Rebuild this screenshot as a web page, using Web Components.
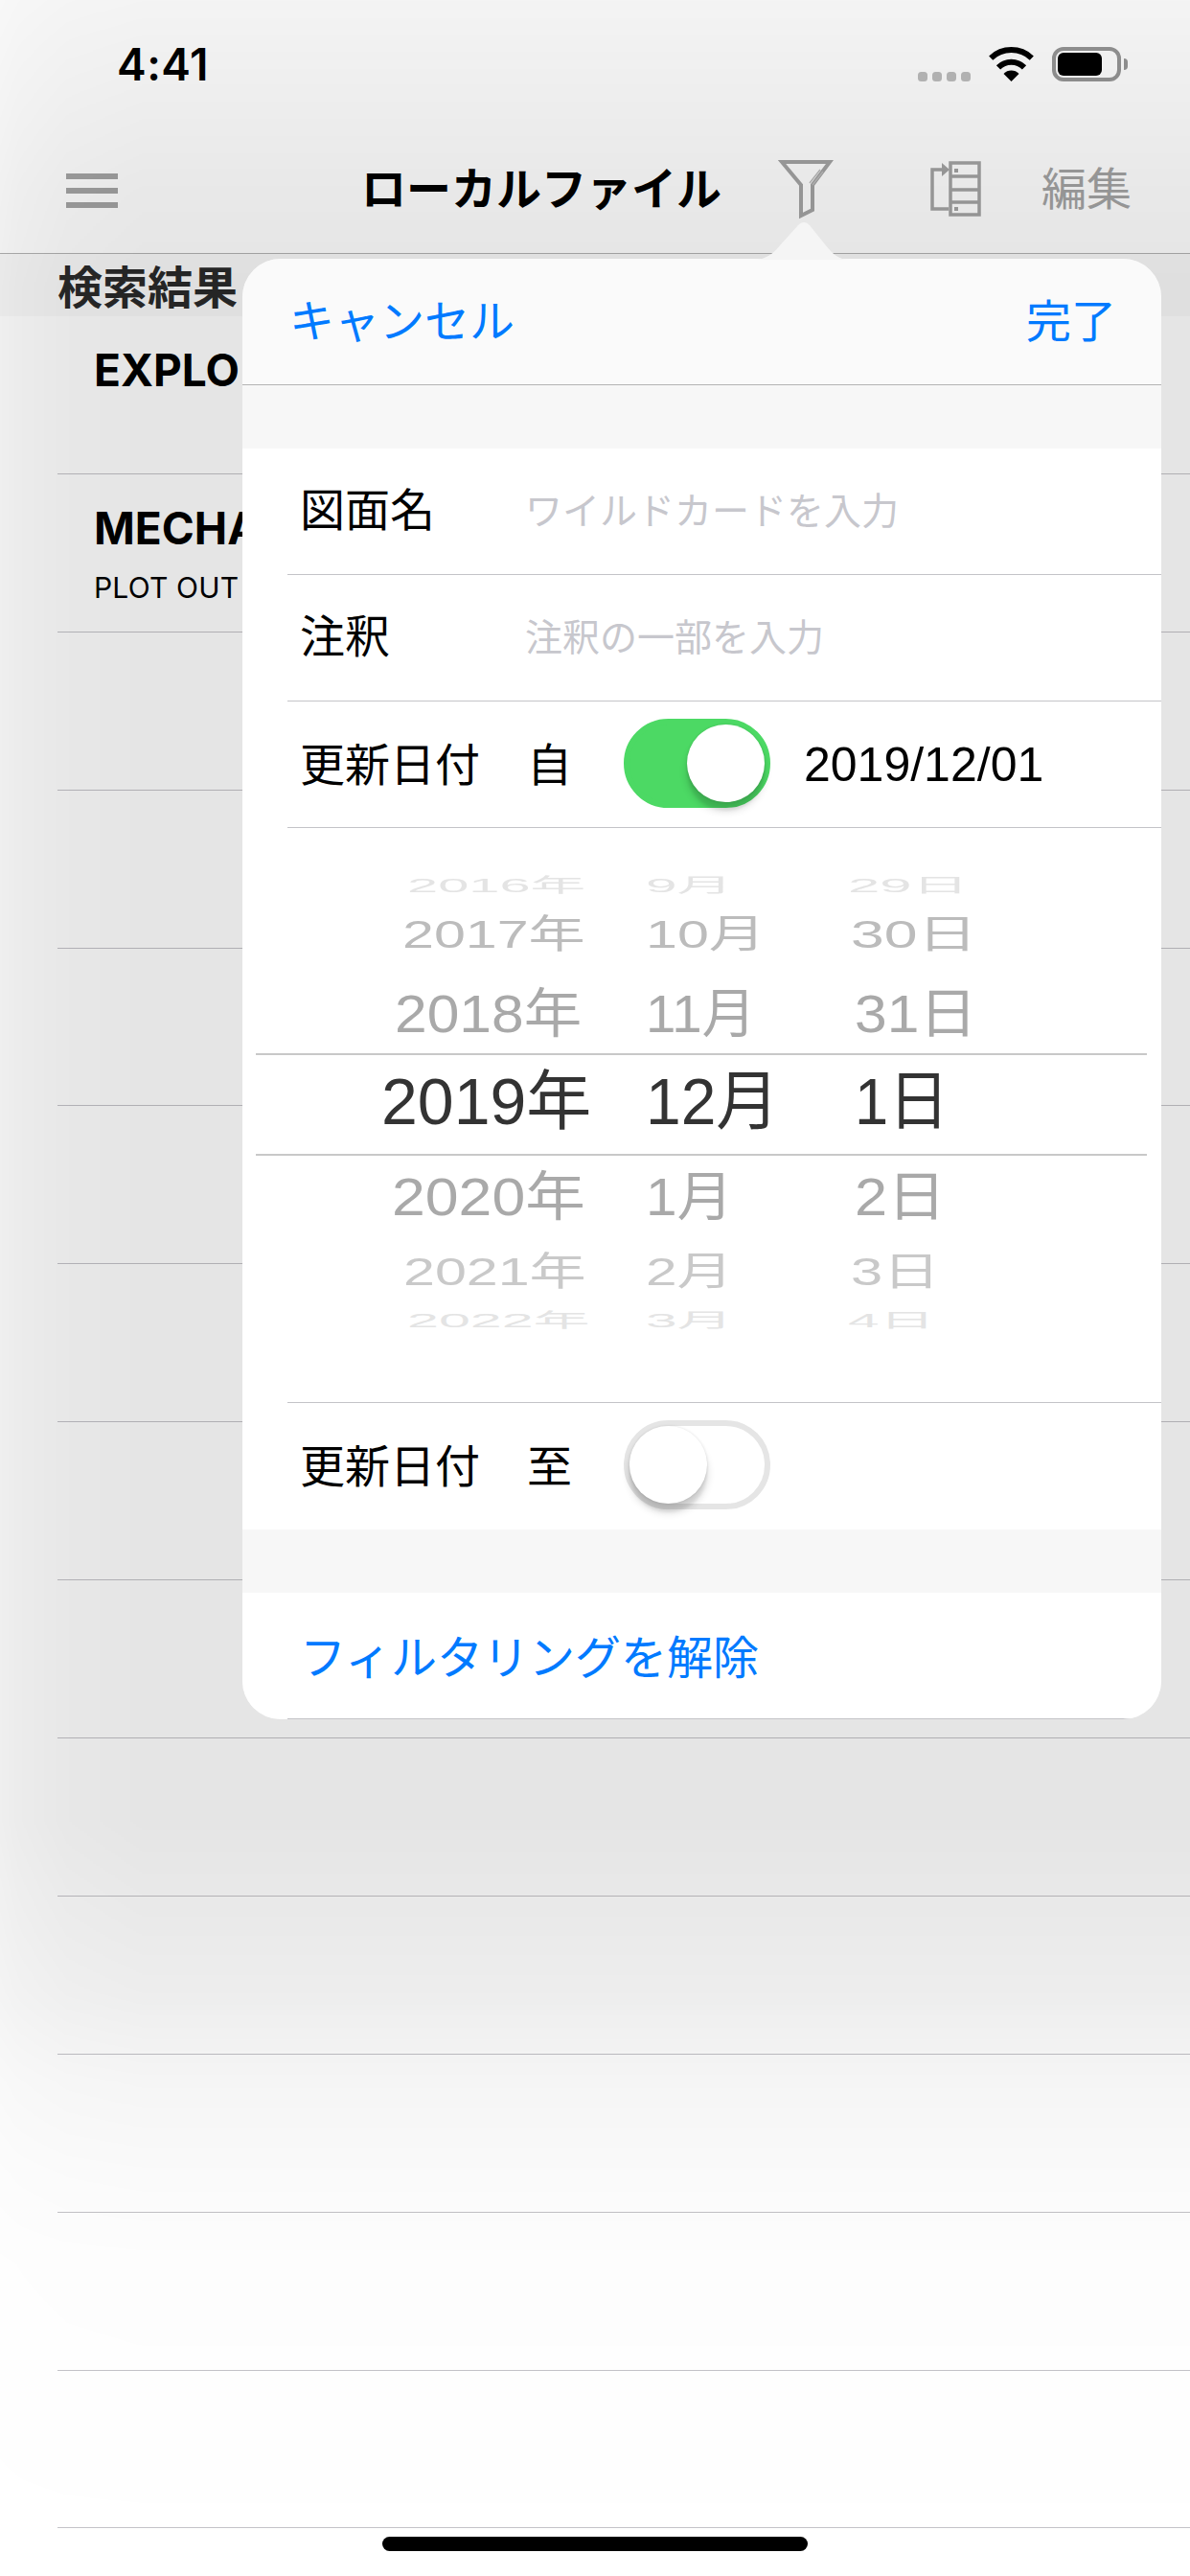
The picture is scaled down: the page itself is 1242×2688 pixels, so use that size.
<!doctype html>
<html lang="ja"><head><meta charset="utf-8">
<style>
html,body{margin:0;padding:0;background:#fff}
body{width:1242px;height:2688px;overflow:hidden;position:relative;font-family:"Liberation Sans","Noto Sans CJK JP",sans-serif;color:#000}
</style></head><body>
<app-screen></app-screen>
<script>
const CJK='"Noto Sans CJK JP",sans-serif';
function def(name,html,init){
  customElements.define(name,class extends HTMLElement{
    constructor(){super();const r=this.attachShadow({mode:'open'});r.innerHTML=typeof html==='function'?html(this):html;}
    connectedCallback(){
      if(typeof html==='function'){this.shadowRoot.innerHTML=html(this);}
      if(init)init(this);
    }
  });
}
def('status-bar',`<style>
:host{display:flex;height:144px;box-sizing:border-box;padding:41px 65px 0 122px;align-items:flex-start}
.t{font:600 46px/52px Inter,sans-serif;letter-spacing:.5px;flex:1}
.r{display:flex;align-items:flex-start;margin-top:8px}
.d{display:flex;gap:5px;margin-top:26px;margin-right:18px}
.d i{width:10px;height:10px;border-radius:3.5px;background:#bdbdbd}
svg{display:block}
.b{margin-left:18px;display:flex;align-items:center}
.bx{width:72px;height:36px;box-sizing:border-box;border:4px solid #969696;border-radius:12px;padding:2px}
.bx i{display:block;width:46px;height:24px;background:#000;border-radius:6px}
.n{width:4px;height:12px;background:#969696;border-radius:0 6px 6px 0;margin-left:3px}
</style><div class="t">4:41</div><div class="r"><div class="d"><i></i><i></i><i></i><i></i></div>
<svg width="49" height="36" viewBox="0 0 49 36"><path d="M3.2 11.6A31 31 0 0 1 45.8 11.6" fill="none" stroke="#000" stroke-width="6"/><path d="M11 21.3A19 19 0 0 1 38 21.3" fill="none" stroke="#000" stroke-width="6"/><path d="M24.5 36L16.5 28A11 11 0 0 1 32.5 28Z" fill="#000"/></svg>
<div class="b"><div class="bx"><i></i></div><div class="n"></div></div></div>`);

def('nav-bar',`<style>
:host{display:block;height:121px;box-sizing:border-box;border-bottom:1px solid #b2b2b2;position:relative}
.w{display:flex;align-items:center;height:120px;padding-left:69px}
.h{width:54px;display:flex;flex-direction:column;gap:9px;margin-top:-10px}
.h i{height:6px;background:#a4a4a4}
.ti{font:700 47px/60px ${CJK};margin-left:254px;width:435px;margin-top:-20px;white-space:nowrap}
svg{display:block}
.f{margin-top:-14px}.e{margin-left:100px;margin-top:-14px}
.ed{font:400 47px/60px ${CJK};color:#a4a4a4;margin-left:63px;margin-top:-21px}
</style><div class="w"><div class="h"><i></i><i></i><i></i></div><div class="ti">ローカルファイル</div>
<svg class="f" width="58" height="64" viewBox="0 0 58 64"><path d="M4 4H54L36 28V54L24 60V28Z" fill="none" stroke="#a4a4a4" stroke-width="4" stroke-linejoin="miter"/><path d="M44 12L33 26M47 14L36 28" stroke="#bdbdbd" stroke-width="1.5" fill="none"/></svg>
<svg class="e" width="54" height="58" viewBox="0 0 54 58"><path d="M22 2H52V56H22ZM22 16H52M22 30H52M22 43H52" fill="none" stroke="#a4a4a4" stroke-width="3.5"/><path d="M26 8h4v4h-4zM26 48h4v4h-4z" fill="#a4a4a4"/><path d="M20 50H3V9H14" fill="none" stroke="#a4a4a4" stroke-width="3.5"/><path d="M13 2L21 9L13 16Z" fill="#a4a4a4"/></svg>
<div class="ed">編集</div></div>`);

def('result-row',el=>`<style>
:host{display:block;height:164.9px;box-sizing:border-box;margin-left:60px;border-bottom:1px solid #c4c3c8;padding:28px 0 0 38px;white-space:nowrap}
.a{font:700 46px/56px Inter,sans-serif;height:56px}
.b{font:400 30px/36px Inter,sans-serif;margin-top:16px;letter-spacing:.2px}
</style><div class="a">${el.getAttribute('t')||''}</div><div class="b">${el.getAttribute('s')||''}</div>`);

def('result-list',`<style>
:host{display:block}
.s{height:65px;background:rgba(0,0,0,.025);padding-left:60px;font:700 47px/63px ${CJK};color:#2a2a2a;white-space:nowrap}
</style><div class="s">検索結果</div><slot></slot>`);

def('ios-switch',el=>{const on=el.hasAttribute('on');return `<style>
:host{display:block;width:153px;height:93px;margin-top:-2px}
.t{width:153px;height:93px;box-sizing:border-box;border-radius:47px;border:6px solid ${on?'#4cd964':'#e5e5e5'};background:${on?'#4cd964':'#fff'};display:flex;justify-content:${on?'flex-end':'flex-start'}}
.k{width:81px;height:81px;border-radius:50%;background:#fff;box-shadow:0 9px 9px rgba(0,0,0,.16),0 9px 3px rgba(0,0,0,.06),0 0 3px rgba(0,0,0,.12)}
</style><div class="t"><div class="k"></div></div>`});

def('form-row',el=>`<style>
:host{display:block;height:132px;box-sizing:border-box;margin-left:47px;border-bottom:1px solid #c4c4c8;padding-left:13px}
.w{display:flex;align-items:center;height:131px;font:400 47px/60px ${CJK};white-space:nowrap}
</style><div class="w"><slot></slot></div>`);

def('date-wheel',el=>{
 const rows=[
 [36,'#e4e4e4',0,[['2016年',27,.85,.3],['9月',0,.86,.3],['29日',0,.88,.3]]],
 [66,'#bcbcbc',0,[['2017年',22,.87,.6],['10月',0,.87,.6],['30日',3,.92,.6]]],
 [91,'#a9a9a9',4,[['2018年',14,.89,.82],['11月',0,.83,.82],['31日',7,.89,.82]]],
 [107,'#333',-3,[['2019年',0,1,1],['12月',0,.97,1],['1日',7,.93,1]]],
 [84,'#a9a9a9',0,[['2020年',11,.92,.82],['1月',0,.86,.82],['2日',7,.9,.82]]],
 [68,'#c9c9c9',3,[['2021年',23,.87,.6],['2月',0,.86,.6],['3日',3,.88,.6]]],
 [42,'#e4e4e4',-1,[['2022年',27,.87,.3],['3月',0,.86,.3],['4日',0,.86,.3]]]];
 return `<style>
:host{display:block;height:599px;box-sizing:border-box;padding-top:42px}
.r{display:grid;grid-template-columns:276px 211px 1fr;padding-left:145px}
.c{display:block;white-space:nowrap;font:400 68px "Liberation Sans",${CJK};transform-origin:left center}
.m{border-top:2px solid #c8c8c8;border-bottom:2px solid #c8c8c8;margin:0 15px 0 14px;padding-left:131px;box-sizing:border-box}
</style>`+rows.map((r,i)=>{const lh=i==3?r[0]-4:r[0];return `<div class="r${i==3?' m':''}" style="height:${r[0]}px;color:${r[1]}">`+r[3].map(c=>`<span class="c" style="height:${lh}px;line-height:${lh}px;margin-left:${c[1]}px;transform:translateY(${r[2]}px) scale(${c[2]},${c[3]})">${c[0]}</span>`).join('')+`</div>`}).join('');
});

def('filter-popover',`<style>
:host{display:block;position:absolute;left:253px;top:270px;width:959px;height:1524px}
.ar{position:absolute;left:534px;top:-39px}
.card{height:100%;border-radius:40px;overflow:hidden;background:#f7f7f7;display:flex;flex-direction:column;font-family:${CJK}}
.hd{height:132px;box-sizing:border-box;background:#fafafa;border-bottom:1px solid #b4b4b4;display:flex;justify-content:space-between;align-items:center;padding:0 47px 0 49px;font:400 47px/60px ${CJK};color:#007aff}
.hd span{margin-top:-7px}
.gap{height:66px;flex:none}
.grp{background:#fff}
.ph{color:#c7c7cd;font-size:39px;margin-top:-8px}
.l{width:235px;display:inline-block;margin-top:-9px}
.l2{width:237px;display:inline-block;margin-top:-5px}
.s{width:101px;display:inline-block;margin-top:-5px}
.dt{font:400 50px/60px "Liberation Sans",sans-serif;margin-left:35px}
.lnk{color:#007aff;font-size:48px;margin-top:-4px}
.sep{height:1px;margin-left:47px;background:#c4c4c8}
</style>
<svg class="ar" width="100" height="40" viewBox="0 0 100 40"><path d="M0 40C12 40 20 34 28 24L46 4C50 0 54 0 58 4L74 24C82 34 88 40 100 40Z" fill="#f5f5f5"/></svg>
<div class="card"><div class="hd"><span>キャンセル</span><span>完了</span></div><div class="gap"></div>
<div class="grp">
<form-row><span class="l">図面名</span><span class="ph">ワイルドカードを入力</span></form-row>
<form-row><span class="l">注釈</span><span class="ph">注釈の一部を入力</span></form-row>
<form-row><span class="l2">更新日付</span><span class="s">自</span><ios-switch on></ios-switch><span class="dt">2019/12/01</span></form-row>
<date-wheel></date-wheel><div class="sep"></div>
<form-row style="border-bottom:0"><span class="l2">更新日付</span><span class="s">至</span><ios-switch></ios-switch></form-row>
</div><div class="gap"></div>
<div class="grp"><form-row><span class="lnk">フィルタリングを解除</span></form-row></div>
</div>`);

const vm='linear-gradient(180deg,rgba(0,0,0,.44) 0,rgba(0,0,0,.88) 200px,#000 300px,#000 1900px,rgba(0,0,0,.8) 2015px,rgba(0,0,0,.68) 2078px,rgba(0,0,0,.38) 2172px,rgba(0,0,0,.2) 2267px,rgba(0,0,0,.08) 2362px,rgba(0,0,0,.04) 2519px,transparent 2688px),linear-gradient(90deg,rgba(0,0,0,.62) 0,rgba(0,0,0,.74) 20px,rgba(0,0,0,.9) 70px,#000 150px)';
def('dim-layer',`<style>:host{display:block;position:absolute;inset:0;background:rgba(0,0,0,.1);-webkit-mask-image:${vm};mask-image:${vm};-webkit-mask-composite:source-in;mask-composite:intersect}</style>`);
def('home-bar',`<style>:host{display:block;position:absolute;left:399px;top:2647px;width:444px;height:15px;border-radius:8px;background:#000}</style>`);

def('app-screen',`<style>:host{display:block;position:relative;width:1242px;height:2688px;overflow:hidden;background:#fff}</style>
<status-bar></status-bar><nav-bar></nav-bar>
<result-list>
<result-row t="EXPLO"></result-row><result-row t="MECHA" s="PLOT OUT"></result-row>
<result-row></result-row><result-row></result-row><result-row></result-row><result-row></result-row><result-row></result-row><result-row></result-row><result-row></result-row><result-row></result-row><result-row></result-row><result-row></result-row><result-row></result-row><result-row></result-row>
</result-list>
<dim-layer></dim-layer><filter-popover></filter-popover><home-bar></home-bar>`);
</script>
</body></html>
